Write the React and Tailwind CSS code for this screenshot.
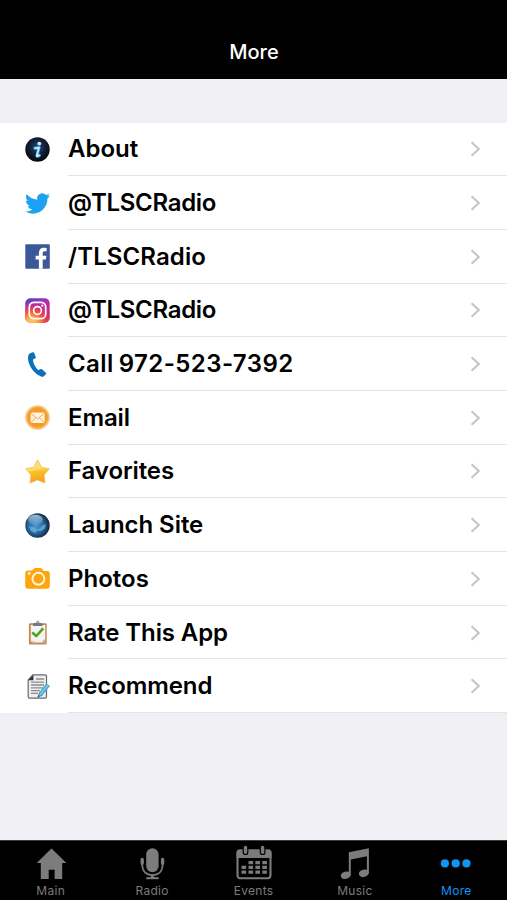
import React, { useState } from "react";

const AboutIcon = () => (
  <svg viewBox="0 0 25 25" className="w-[25px] h-[25px]">
    <defs>
      <radialGradient id="about-bg" cx="0.5" cy="0.4" r="0.55">
        <stop offset="0" stopColor="#244f80" />
        <stop offset="0.5" stopColor="#14243c" />
        <stop offset="1" stopColor="#080b12" />
      </radialGradient>
    </defs>
    <circle cx="12.5" cy="12.5" r="12.2" fill="url(#about-bg)" />
    <circle cx="14.3" cy="6.6" r="1.9" fill="#c5ecff" />
    <path d="M9.8 11.2L14.2 10.4L11.9 18.6Q11.8 20 14.4 18.4" fill="none" stroke="#4a9bd8" strokeWidth="3" strokeLinecap="round" strokeLinejoin="round" />
    <path d="M10 11.2L14 10.6L11.7 18.6Q11.8 19.8 14.2 18.3" fill="none" stroke="#c8eeff" strokeWidth="1.6" strokeLinecap="round" strokeLinejoin="round" />
  </svg>
);

const TwitterIcon = () => (
  <svg viewBox="0 0 24 24" className="w-[25px] h-[25px]">
    <path
      fill="#1da1f2"
      d="M23.95 4.57a10 10 0 0 1-2.82.77 4.96 4.96 0 0 0 2.16-2.72c-.95.55-2 .95-3.13 1.18a4.92 4.92 0 0 0-8.38 4.48C7.69 8.09 4.07 6.13 1.64 3.16a4.82 4.82 0 0 0-.67 2.48c0 1.71.87 3.21 2.19 4.1a4.9 4.9 0 0 1-2.23-.62v.06a4.92 4.92 0 0 0 3.95 4.83 5 5 0 0 1-2.21.08 4.94 4.94 0 0 0 4.6 3.42A9.87 9.87 0 0 1 0 19.54a13.99 13.99 0 0 0 7.56 2.21c9.05 0 14-7.5 14-13.98 0-.21 0-.42-.02-.63a9.94 9.94 0 0 0 2.46-2.55z"
    />
  </svg>
);

const FacebookIcon = () => (
  <svg viewBox="0 0 25 25" className="w-[25px] h-[25px]">
    <rect x="0.3" y="0.3" width="24.5" height="24.5" rx="1" fill="#3b5998" />
    <path
      fill="#fff"
      d="M13.9 24.8V15.4H10.6V11.7H13.9V8.9C13.9 5.6 15.8 3.8 18.8 3.8C20.2 3.8 21.3 3.9 21.6 4V7.3H19.6C18 7.3 17.7 8.1 17.7 9.3V11.7H21.4L20.9 15.4H17.7V24.8Z"
    />
  </svg>
);

const InstagramIcon = () => (
  <svg viewBox="0 0 25 25" className="w-[25px] h-[25px]">
    <defs>
      <linearGradient id="insta-base" x1="0.2" y1="0" x2="0.8" y2="1">
        <stop offset="0" stopColor="#5b3fd0" />
        <stop offset="0.4" stopColor="#b52bab" />
        <stop offset="1" stopColor="#d62976" />
      </linearGradient>
      <radialGradient id="insta-glow" cx="0.25" cy="1.05" r="0.95">
        <stop offset="0" stopColor="#ffd36b" />
        <stop offset="0.25" stopColor="#fdb44b" />
        <stop offset="0.55" stopColor="#f5503f" />
        <stop offset="1" stopColor="#d62976" stopOpacity="0" />
      </radialGradient>
    </defs>
    <rect x="0.3" y="0.3" width="24.4" height="24.4" rx="5" fill="url(#insta-base)" />
    <rect x="0.3" y="0.3" width="24.4" height="24.4" rx="5" fill="url(#insta-glow)" />
    <rect x="4.3" y="4.3" width="16.4" height="16.4" rx="4.7" fill="none" stroke="#fff" strokeWidth="1.7" />
    <circle cx="12.5" cy="12.5" r="3.9" fill="none" stroke="#fff" strokeWidth="1.7" />
    <circle cx="17.3" cy="7.7" r="1.1" fill="#fff" />
  </svg>
);

const PhoneIcon = () => (
  <svg viewBox="0 0 25 25" className="w-[25px] h-[25px]">
    <path
      fill="#0c70bd"
      d="M5.2 1.3L7.6 0.3Q8.7 0 9.2 1.1L10.7 4.7Q11.1 5.8 10.1 6.4L8 7.5Q7.9 9.8 9.3 12.7Q11 16.1 13.3 18.2L15.4 17.1Q16.5 16.7 17.3 17.6L20.8 20.7Q21.7 21.5 20.8 22.3L18.9 24.3Q17.8 25.3 15.6 24.3C10.8 22.1 7.4 18.5 5.1 13.9C3.1 9.9 2.5 5.9 3.4 3.2Q3.8 1.8 5.2 1.3Z"
    />
  </svg>
);

const EmailIcon = () => (
  <svg viewBox="0 0 25 25" className="w-[25px] h-[25px]">
    <circle cx="12.5" cy="12.5" r="12.3" fill="#f9c783" />
    <circle cx="12.5" cy="12.5" r="10.3" fill="#f49b24" stroke="#f2a541" strokeWidth="0.8" />
    <rect x="5.6" y="7.4" width="14" height="10.6" rx="1.3" fill="#fff3df" />
    <path d="M6 8.2L12.6 14L19.2 8.2M6.2 17.5L10.7 12.6M19 17.5L14.5 12.6" fill="none" stroke="#f0a03a" strokeWidth="0.9" />
  </svg>
);

const StarIcon = () => (
  <svg viewBox="0 0 25 25" className="w-[25px] h-[25px]">
    <defs>
      <linearGradient id="star-fill" x1="0" y1="0" x2="0.15" y2="1">
        <stop offset="0" stopColor="#fbd58a" />
        <stop offset="0.45" stopColor="#ffe06b" />
        <stop offset="0.55" stopColor="#fdc02c" />
        <stop offset="1" stopColor="#f5a11c" />
      </linearGradient>
    </defs>
    <path
      d="M12.5 0.8L16.5 8.3L24.4 9.8L19.1 15.8L20 24L12.5 21L5 24L5.9 15.8L0.6 9.8L8.5 8.3Z"
      fill="url(#star-fill)"
      stroke="#f3b64a"
      strokeWidth="0.7"
      strokeLinejoin="round"
    />
  </svg>
);

const GlobeIcon = () => (
  <svg viewBox="0 0 25 25" className="w-[25px] h-[25px]">
    <defs>
      <radialGradient id="globe-fill" cx="0.43" cy="0.5" r="0.58">
        <stop offset="0" stopColor="#4c9bd0" />
        <stop offset="0.5" stopColor="#2b6ea6" />
        <stop offset="0.8" stopColor="#193f69" />
        <stop offset="1" stopColor="#112138" />
      </radialGradient>
      <linearGradient id="globe-shine" x1="0" y1="0" x2="0" y2="1">
        <stop offset="0" stopColor="#d5eafa" stopOpacity="0.7" />
        <stop offset="1" stopColor="#d5eafa" stopOpacity="0.1" />
      </linearGradient>
    </defs>
    <circle cx="12.5" cy="12.5" r="12.2" fill="url(#globe-fill)" />
    <path d="M4 13Q7 15 9 14L11 16L15 15.5L18 12L21 11.5L20 15.5L16 18L12.5 17.5L10 20L6 18Z" fill="#79c4eb" opacity="0.6" />
    <ellipse cx="10.4" cy="6.7" rx="7.4" ry="5" fill="url(#globe-shine)" />
  </svg>
);

const CameraIcon = () => (
  <svg viewBox="0 0 25 25" className="w-[25px] h-[25px]">
    <path
      fill="#fda50f"
      d="M3 4.5H6.8L8.5 3Q9.3 2.1 10.5 2.1H15.3Q16.5 2.1 17.2 3L18.8 5.1H22Q24.8 5.1 24.8 8V19.5Q24.8 22.7 21.8 22.7H3.2Q0.2 22.7 0.2 19.5V7.5Q0.2 4.5 3 4.5Z"
    />
    <circle cx="13.4" cy="12.8" r="6" fill="none" stroke="#fff6df" strokeWidth="1.9" />
    <circle cx="4.2" cy="7.5" r="1.4" fill="#fff0d0" />
  </svg>
);

const ClipboardIcon = () => (
  <svg viewBox="0 0 25 25" className="w-[25px] h-[25px]">
    <rect x="3.9" y="3.2" width="17.8" height="21.4" rx="1.2" fill="#c98a52" />
    <path d="M5.8 5H20.2V22.4H8.6L5.8 21.4Z" fill="#f4f4f5" />
    <path d="M5.8 20.6L15.5 22.6H7.6Z" fill="#cfcfd2" />
    <path d="M16.6 22.5L20.2 18.8V22.5Z" fill="#a9a9ad" />
    <path d="M8 5.9V3.8Q8 3 9.2 3H11.2Q11.2 0.4 12.8 0.4Q14.4 0.4 14.4 3H16.3Q17.6 3 17.6 3.8V5.9Z" fill="#77797d" />
    <circle cx="12.8" cy="2" r="0.8" fill="#e4e4e6" />
    <path d="M7.2 12.4L11.4 16L18.2 8.4" fill="none" stroke="#48a51f" strokeWidth="2.6" strokeLinejoin="round" />
  </svg>
);

const NoteIcon = () => (
  <svg viewBox="0 0 25 25" className="w-[25px] h-[25px]">
    <path d="M7.8 0.9H20.3Q21.5 0.9 21.5 2.1V22.8Q21.5 24.2 20.2 24.2H4.5Q3.2 24.2 3.2 22.8V6Z" fill="#eeeef0" stroke="#66696d" strokeWidth="1.2" />
    <path d="M3.2 6.2L8.4 0.9V6.2Z" fill="#2f3235" />
    <path d="M11 5H19M6 8.2H19M6 11H19M6 13.8H18M6 16.6H15M6 19.4H13" stroke="#8a8c90" strokeWidth="1.3" />
    <path d="M12.4 23.8L13.7 18.9L21.5 9.3L24.9 12.1L17 21.9Z" fill="#4ea8d0" />
    <path d="M15.3 20.4L23 11" stroke="#9bd6ec" strokeWidth="1.1" />
    <path d="M12.4 23.8L13.2 21L14.7 22.5Z" fill="#44545d" />
  </svg>
);

const HomeIcon = () => (
  <svg viewBox="0 0 36 36" className="w-9 h-9">
    <path fill="#7c7c7c" d="M18.5 2.6L33.4 17H29.2V33H21.6V23.7H15.7V33H7.8V17H3.7Z" />
  </svg>
);

const MicIcon = () => (
  <svg viewBox="0 0 36 36" className="w-9 h-9">
    <rect x="12.2" y="2.2" width="12.4" height="24" rx="6.2" fill="#7c7c7c" />
    <path d="M8.2 14V18.8C8.2 25.2 12.2 29 18.4 29S28.6 25.2 28.6 18.8V14" fill="none" stroke="#7c7c7c" strokeWidth="1.7" />
    <path d="M8.2 13.4V17.2M28.6 13.4V17.2" stroke="#7c7c7c" strokeWidth="3.4" strokeLinecap="round" />
    <path d="M18.4 29V32" stroke="#7c7c7c" strokeWidth="3" />
    <path d="M12.2 32.2H24.7" stroke="#7c7c7c" strokeWidth="2" />
  </svg>
);

const CalendarIcon = () => (
  <svg viewBox="0 0 36 36" className="w-9 h-9 overflow-visible">
    <rect x="1.5" y="4.5" width="33" height="27.8" rx="3" fill="none" stroke="#7c7c7c" strokeWidth="2.1" />
    <path d="M0.5 12V6.6Q0.5 3.6 3.5 3.6H32.5Q35.5 3.6 35.5 6.6V12Z" fill="#7c7c7c" />
    <path d="M9.5 1.5V6.2M26.6 1.5V6.2" stroke="#000" strokeWidth="5.8" strokeLinecap="round" />
    <path d="M9.5 1.5V6.2M26.6 1.5V6.2" stroke="#7c7c7c" strokeWidth="3.4" strokeLinecap="round" />
    <g fill="#7c7c7c">
      <path d="M12.5 15h4.6v3.3h-4.6zM19.4 15h4.6v3.3h-4.6zM26.3 15h4.6v3.3h-4.6z" />
      <path d="M5.5 19.7h4.6v3.3h-4.6zM12.5 19.7h4.6v3.3h-4.6zM19.4 19.7h4.6v3.3h-4.6zM26.3 19.7h4.6v3.3h-4.6z" />
      <path d="M5.5 24.4h4.6v3.3h-4.6zM12.5 24.4h4.6v3.3h-4.6zM19.4 24.4h4.6v3.3h-4.6zM26.3 24.4h4.6v3.3h-4.6z" />
    </g>
  </svg>
);

const MusicIcon = () => (
  <svg viewBox="0 0 36 36" className="w-9 h-9">
    <path fill="#7c7c7c" d="M11.8 6.2L31.9 2.3V27H29.9V10.2L13.8 13.6V29H11.8Z" />
    <ellipse cx="8.7" cy="29.2" rx="5.1" ry="3.7" transform="rotate(-15 8.7 29.2)" fill="#7c7c7c" />
    <ellipse cx="26.9" cy="27.2" rx="5.1" ry="3.7" transform="rotate(-15 26.9 27.2)" fill="#7c7c7c" />
  </svg>
);

const MoreIcon = () => (
  <svg viewBox="0 0 36 36" className="w-9 h-9">
    <circle cx="6.9" cy="17.4" r="4.1" fill="#0f94f5" />
    <circle cx="17.7" cy="17.4" r="4.1" fill="#0f94f5" />
    <circle cx="28.4" cy="17.4" r="4.1" fill="#0f94f5" />
  </svg>
);

const rows = [
  { label: "About", icon: AboutIcon, tracking: "tracking-normal" },
  { label: "@TLSCRadio", icon: TwitterIcon, tracking: "tracking-[-0.3px]" },
  { label: "/TLSCRadio", icon: FacebookIcon, tracking: "tracking-[0.1px]" },
  { label: "@TLSCRadio", icon: InstagramIcon, tracking: "tracking-[-0.3px]" },
  { label: "Call 972-523-7392", icon: PhoneIcon, tracking: "tracking-[0.43px] [word-spacing:-1.5px]" },
  { label: "Email", icon: EmailIcon, tracking: "tracking-[-0.1px]" },
  { label: "Favorites", icon: StarIcon, tracking: "tracking-[-0.1px]" },
  { label: "Launch Site", icon: GlobeIcon, tracking: "tracking-[-0.05px]" },
  { label: "Photos", icon: CameraIcon, tracking: "tracking-normal" },
  { label: "Rate This App", icon: ClipboardIcon, tracking: "tracking-[-0.1px]" },
  { label: "Recommend", icon: NoteIcon, tracking: "tracking-[-0.1px]" },
];

const tabs = [
  { label: "Main", icon: HomeIcon },
  { label: "Radio", icon: MicIcon },
  { label: "Events", icon: CalendarIcon },
  { label: "Music", icon: MusicIcon },
  { label: "More", icon: MoreIcon },
];

export default function App() {
  const [activeTab, setActiveTab] = useState("More");

  return (
    <div className="flex flex-col h-screen w-full overflow-hidden bg-[#efeff4] font-['Inter','Liberation_Sans',sans-serif]">
      <header className="h-[79px] shrink-0 bg-black flex items-end justify-center pb-[13px] pl-px">
        <h1 className="text-[20px] leading-7 font-medium text-white">More</h1>
      </header>

      <main className="flex-1 pt-[43.5px]">
        <ul className="bg-white">
          {rows.map((row, i) => (
            <li key={i} className="flex h-[53.7px] items-stretch pl-[25px]">
              <span className="flex w-[43px] shrink-0 items-center">
                <row.icon />
              </span>
              <div className="flex flex-1 items-center justify-between border-b border-[#e4e4e6] pt-px pr-[26px]">
                <span className={`text-[24px] leading-7 font-semibold text-black whitespace-nowrap ${row.tracking}`}>
                  {row.label}
                </span>
                <svg viewBox="0 0 11 16" className="w-[11px] h-4">
                  <path d="M1.6 1.2L8.8 8L1.6 14.8" fill="none" stroke="#c4c4c8" strokeWidth="2" />
                </svg>
              </div>
            </li>
          ))}
        </ul>
      </main>

      <nav className="flex h-[60px] shrink-0 border-t border-[#3c3c3c] bg-black pt-[5px]">
        {tabs.map((tab) => (
          <button
            key={tab.label}
            onClick={() => setActiveTab(tab.label)}
            className={`flex flex-1 flex-col items-center ${
              activeTab === tab.label ? "text-[#0f94f5]" : "text-[#7c7c7c]"
            }`}
          >
            <tab.icon />
            <span className="mt-[2px] text-[12px] leading-[14px] tracking-[0.3px]">{tab.label}</span>
          </button>
        ))}
      </nav>
    </div>
  );
}
